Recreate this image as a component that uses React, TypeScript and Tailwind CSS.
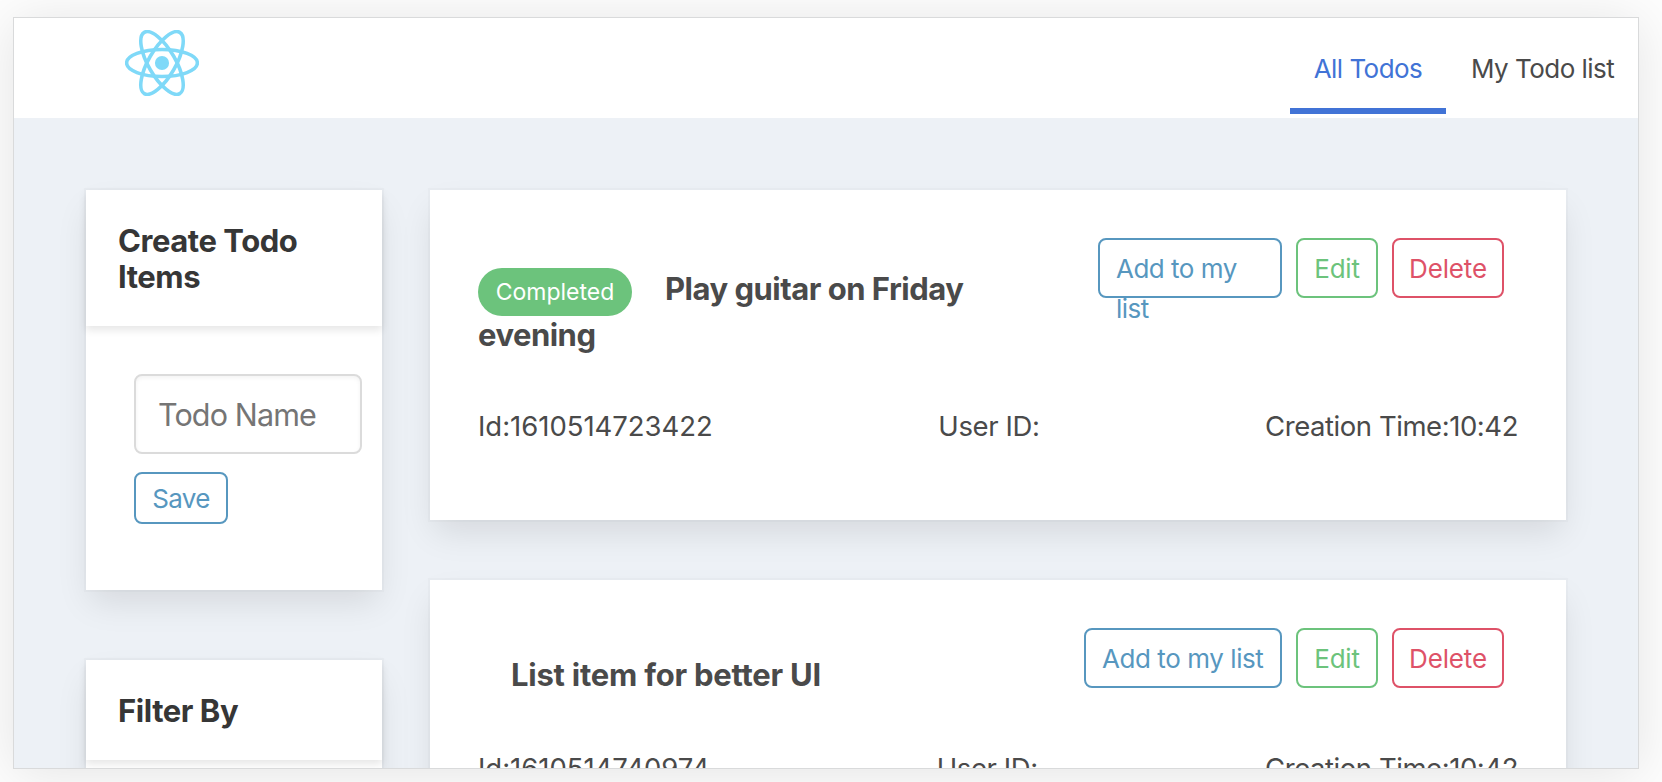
import type { ReactNode } from "react";

type Todo = { id: string; title: string; time: string; completed: boolean; spacing: string };

const todos: Todo[] = [
  { id: "1610514723422", title: "Play guitar on Friday evening", time: "10:42", completed: true, spacing: "tracking-[-0.5px]" },
  { id: "1610514740974", title: "List item for better UI", time: "10:42", completed: false, spacing: "tracking-[-0.23px]" },
];

const cardShadow = "shadow-[0_16px_32px_-4px_rgba(10,10,10,0.1),0_0_0_2px_rgba(10,10,10,0.02)]";

function ReactLogo() {
  return (
    <svg className="h-[66px] w-[74px]" viewBox="-11.5 -10.25 23 20.5" fill="none" stroke="#7fd9f8" strokeWidth="1.1">
      <circle r="2.2" fill="#7fd9f8" stroke="none" />
      <ellipse rx="11" ry="4.2" />
      <ellipse rx="11" ry="4.2" transform="rotate(60)" />
      <ellipse rx="11" ry="4.2" transform="rotate(120)" />
    </svg>
  );
}

function SideCard({ title, className, children }: { title: string; className: string; children?: ReactNode }) {
  return (
    <section className={`w-[296px] shrink-0 bg-white ${cardShadow} ${className}`}>
      <header className="px-8 pt-[33px] pb-[31px] shadow-[0_4px_8px_rgba(10,10,10,0.1)]">
        <h2 className="text-[31px] leading-9 font-bold tracking-[-0.44px] text-[#363636]">{title}</h2>
      </header>
      {children}
    </section>
  );
}

function TodoCard({ todo }: { todo: Todo }) {
  return (
    <article className={`shrink-0 bg-white px-12 pt-12 ${cardShadow} ${todo.completed ? "h-[330px]" : "h-[300px]"}`}>
      <div className={`flex items-start justify-between ${todo.completed ? "h-[168px]" : "h-[120px]"}`}>
        <h3 className={`w-[520px] text-[31px] leading-[37px] font-bold ${todo.spacing} ${todo.completed ? "mt-[30px]" : "mt-7 pl-[33px]"}`}>
          {todo.completed && (
            <span className="mr-[33px] inline-flex h-12 w-[154px] items-center justify-center rounded-full bg-[#6cc37c] text-[23px] font-normal tracking-normal text-white">
              Completed
            </span>
          )}
          {todo.title}
        </h3>
        <div className="mr-3.5 flex gap-3.5 text-[26px] leading-[39px]">
          <button
            className={`h-[60px] rounded-lg border-2 border-[#5797bf] px-4 pt-[9px] text-left text-[#5797bf] ${
              todo.completed ? "w-[184px] leading-10 tracking-[-0.5px]" : "w-[198px] pb-2 whitespace-nowrap tracking-[-0.43px]"
            }`}
          >
            Add to my list
          </button>
          <button className="h-[60px] w-[82px] rounded-lg border-2 border-[#6cc37c] pt-[9px] pb-2 tracking-[-0.2px] text-[#6cc37c]">Edit</button>
          <button className="h-[60px] w-28 rounded-lg border-2 border-[#de5268] pt-[9px] pb-2 tracking-[-0.14px] text-[#de5268]">Delete</button>
        </div>
      </div>
      <div className="flex justify-between text-[27.5px] leading-10">
        <span className="tracking-[-0.03px]">Id:{todo.id}</span>
        <span className="tracking-[-0.4px]">User ID:</span>
        <span className="tracking-[-0.44px]">Creation Time:{todo.time}</span>
      </div>
    </article>
  );
}

export default function App() {
  return (
    <div className="h-[782px] w-[1662px] overflow-hidden bg-[#fdfdfd] pt-[17px] pl-[13px] font-['Inter',sans-serif] text-[#4a4a4a]">
      <div className="h-[752px] w-[1626px] border border-[#d9dadb] shadow-[0_4px_50px_rgba(0,0,0,0.1)]">
        <div className="flex h-full flex-col overflow-hidden bg-[#edf1f6]">
          <nav className="flex h-[100px] shrink-0 justify-between bg-white">
            <div className="pt-3 pl-[111px]">
              <ReactLogo />
            </div>
            <div className="flex text-[26px] leading-10 whitespace-nowrap">
              <a className="h-24 w-[156px] border-b-[6px] border-[#4173d6] pt-[31px] text-center tracking-[-0.54px] text-[#4173d6]">All Todos</a>
              <a className="h-24 w-[192px] pt-[31px] pl-[25px] tracking-[-0.52px]">My Todo list</a>
            </div>
          </nav>
          <main className="flex gap-12 px-[72px] pt-[72px]">
            <aside className="flex flex-col gap-[70px]">
              <SideCard title="Create Todo Items" className="h-[400px]">
                <div className="flex flex-col items-start p-12">
                  <input
                    placeholder="Todo Name"
                    className="h-20 w-[228px] rounded-lg border-2 border-[#dbdbdb] px-[22px] text-[30.5px] tracking-[-0.87px] shadow-[inset_0_2px_4px_rgba(10,10,10,0.05)] placeholder:text-[#757575]"
                  />
                  <button className="mt-[18px] h-[52px] w-[94px] rounded-lg border-2 border-[#5797bf] text-[26px] leading-[39px] tracking-[-0.67px] text-[#5797bf]">Save</button>
                </div>
              </SideCard>
              <SideCard title="Filter By" className="h-[300px]" />
            </aside>
            <div className="flex w-[1136px] shrink-0 flex-col gap-[60px]">
              {todos.map((todo) => (
                <TodoCard key={todo.id} todo={todo} />
              ))}
            </div>
          </main>
        </div>
      </div>
    </div>
  );
}
